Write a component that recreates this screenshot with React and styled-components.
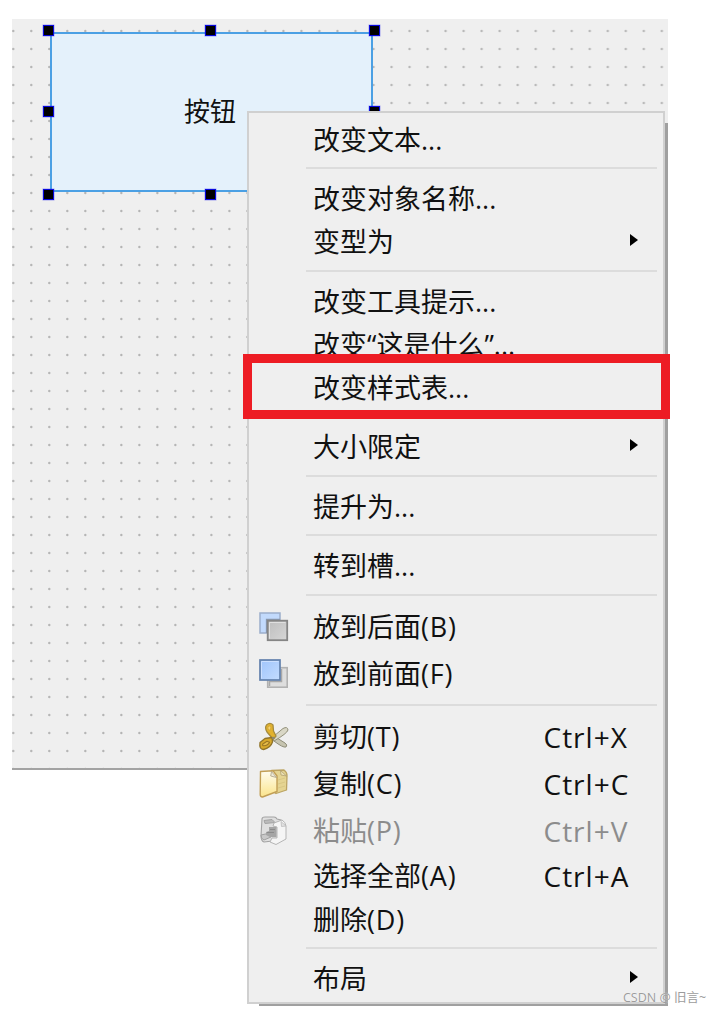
import React from 'react';
import styled, {createGlobalStyle} from 'styled-components';

const GlobalStyle = createGlobalStyle`
    body {
        margin: 0;
        background-color: #fff;
        font-family: "Open Sans", "Noto Sans CJK SC", sans-serif;
        color: #111;
    }
`

const Page = styled.main`
    position: relative;
    box-sizing: border-box;
    height: 1011px;
    padding: 19px 0 0 12px;
    overflow: hidden;
`

const Form = styled.section`
    position: relative;
    box-sizing: border-box;
    width: 656px;
    height: 751px;
    background-color: #efefef;
    background-image: radial-gradient(circle at 1.2px 12px, #b4b4b4 0.6px, transparent 1.7px);
    background-size: 18.03px 18px;
    border-bottom: 2px solid #a3a3a3;
`

const PushButton = styled.div`
    position: absolute;
    left: 38px;
    top: 13px;
    box-sizing: border-box;
    width: 323px;
    height: 160px;
    display: flex;
    align-items: center;
    justify-content: center;
    padding: 0 3px 4px 0;
    border: 2px solid #4ba0e4;
    background-color: #e4f1fb;
    font-size: 26px;
`

const Handle = styled.i`
    position: absolute;
    left: ${props => props.$x}px;
    top: ${props => props.$y}px;
    box-sizing: border-box;
    width: 11px;
    height: 11px;
    border: 1px solid #0808dc;
    background-color: #000;
    box-shadow: 0 0 0 0.5px rgba(40, 40, 240, 0.4);
`

const Menu = styled.ul`
    position: absolute;
    left: 247px;
    top: 111px;
    box-sizing: border-box;
    width: 418px;
    height: 893px;
    margin: 0;
    padding: 4px 6px 0 9px;
    list-style: none;
    border: 2px solid #d0d0d0;
    background-color: #efefef;
    &::before, &::after {
        content: "";
        position: absolute;
        background-color: #a0a0a0;
    }
    &::before {
        left: 416px;
        top: 10px;
        width: 3px;
        height: 883px;
    }
    &::after {
        left: 10px;
        top: 891px;
        width: 409px;
        height: 2px;
    }
`

const Row = styled.li`
    display: grid;
    grid-template-columns: 55px 1fr auto;
    align-items: center;
    box-sizing: border-box;
    height: ${props => props.$tall ? 47 : 43.3}px;
    padding: 2px 19px 0 0;
    font-size: 27px;
    line-height: 40px;
    white-space: nowrap;
    color: ${props => props.$disabled ? '#8c8c8c' : '#111'};
    svg {
        display: block;
    }
`

const Label = styled.span`
    grid-column: 2;
`

const Mnemonic = styled.span`
    letter-spacing: 0.8px;
`

const Shortcut = styled.span`
    width: 94.5px;
    font-size: 28px;
    letter-spacing: 1px;
`

const Arrow = styled.i`
    margin-bottom: 4px;
    border-left: 8px solid #000;
    border-top: 6.5px solid transparent;
    border-bottom: 6.5px solid transparent;
`

const Separator = styled.li`
    height: 2px;
    margin: 7px 0 7px 48px;
    background-color: #dcdcdc;
`

const RedFrame = styled.div`
    position: absolute;
    left: 243px;
    top: 354px;
    box-sizing: border-box;
    width: 427px;
    height: 65px;
    border: 9px solid #ed1c24;
`

const Watermark = styled.div`
    position: absolute;
    left: 623px;
    top: 988px;
    font-size: 12.5px;
    line-height: 20px;
    white-space: nowrap;
    color: #9c9c9c;
    text-shadow: 0 0 1px #fff;
`

const Gradients = () => (
    <defs>
        <linearGradient id="blue" x1="0" y1="0" x2="1" y2="1">
            <stop offset="0" stopColor="#9fc4fb"/>
            <stop offset="1" stopColor="#c3dcff"/>
        </linearGradient>
        <linearGradient id="grey" x1="0" y1="0" x2="1" y2="1">
            <stop offset="0" stopColor="#bdbdbd"/>
            <stop offset="1" stopColor="#d6d6d6"/>
        </linearGradient>
        <linearGradient id="paper" x1="0" y1="0" x2="0" y2="1">
            <stop offset="0" stopColor="#fffdf0"/>
            <stop offset="1" stopColor="#fbe48b"/>
        </linearGradient>
    </defs>
)

const BackIcon = () => (
    <svg width="32" height="32" viewBox="0 0 32 32">
        <Gradients/>
        <rect x="2" y="2" width="20" height="20" fill="#c2dafc" stroke="#9caecb" strokeWidth="1.5"/>
        <path d="M8.5 22V8.5H22" fill="none" stroke="#8998af" strokeWidth="1.3"/>
        <rect x="9.7" y="9.7" width="19.5" height="19.5" fill="url(#grey)" stroke="#858585" strokeWidth="1.8"/>
        <path d="M11.5 27.5V11.5H27.5" fill="none" stroke="#e0e0e0"/>
    </svg>
)

const FrontIcon = () => (
    <svg width="32" height="32" viewBox="0 0 32 32">
        <rect x="9.7" y="9.7" width="19.5" height="19.5" fill="#dedede" stroke="#b2b2b2" strokeWidth="1.6"/>
        <path d="M11.5 28V23.5H23.5V11" fill="none" stroke="#a8a8a8" strokeWidth="1.5"/>
        <rect x="2" y="2" width="20" height="20" fill="url(#blue)" stroke="#6280ac" strokeWidth="1.7"/>
        <path d="M3.5 20.5V3.5H20.5" fill="none" stroke="#cce0ff"/>
    </svg>
)

const CutIcon = () => (
    <svg width="32" height="32" viewBox="0 0 32 32" strokeLinejoin="round">
        <path d="M15 14.5L27 22Q30 24 28 26Q25 27 16 20L12 17.5Z" fill="#c6c4b0" stroke="#8f8d79"/>
        <path d="M13 17.5L25 7.5Q29.5 5 30 9Q29 12.5 16 20Z" fill="#d9d7c6" stroke="#929079"/>
        <path d="M8.5 4Q12 .8 15 4L15.5 10L18 15L15 18.5L12 14.5L9 11Q6.5 7 8.5 4Z" fill="#e2b22e" stroke="#a58b3e" strokeWidth="1.3"/>
        <path d="M10 5.8Q12.5 4 12.8 6.3L12.3 9.5Q8.8 8.5 10 5.8Z" fill="#f4d475" stroke="#d0a22e" strokeWidth=".7"/>
        <path d="M2 21.5L7 17.5L14 16.5L14.5 21Q12.5 27 5.5 28.5Q1 28.5 2 21.5Z" fill="#d8a92b" stroke="#90742a" strokeWidth="1.3"/>
        <path d="M4.8 23L9 20.3L11.6 21.2Q10 24.5 6 24.8Q4 24.8 4.8 23Z" fill="#e6bd4c" stroke="#9b7724" strokeWidth="1.1"/>
        <circle cx="15.3" cy="17" r="1.3" fill="#888675"/>
    </svg>
)

const CopyIcon = () => (
    <svg width="32" height="32" viewBox="0 0 32 32" strokeLinejoin="round">
        <path d="M13.5 2.5L26 2Q29.3 4.5 29 8L28.5 22L18 25.5L13 22Z" fill="#e5d492" stroke="#bca463" strokeWidth="1.3"/>
        <path d="M20 12L27 10M20 16L27 14M20 20L27 18" stroke="#d9c784"/>
        <path d="M22.5 2.5L23 7L28.5 8Z" fill="#eee3b7" stroke="#a7966b" strokeWidth=".7"/>
        <path d="M2.5 3.5L15 2.8L19 8V23.5L4.5 29Q2 29 2.2 26Z" fill="url(#paper)" stroke="#c29f55" strokeWidth="1.4"/>
        <path d="M13.5 3.5L12.7 8L18.5 9.5Z" fill="#eee9d8" stroke="#aba084" strokeWidth=".8"/>
    </svg>
)

const PasteIcon = () => (
    <svg width="32" height="32" viewBox="0 0 32 32" strokeLinejoin="round">
        <path d="M4 4Q4 2 7 2H16Q18 2 19 4L23 5V25L6 27Q3 26 3 21Z" fill="#dfdfdf" stroke="#a3a3a3" strokeWidth="1.1"/>
        <path d="M6 5.5L14 4.5L17 7.5L7 8.5Z" fill="#bbb" stroke="#a3a3a3"/>
        <path d="M3 20L12 18L13 22L6 25Q3 24 3 20Z" fill="#c8c8c8" stroke="#a0a0a0"/>
        <path d="M16 8L24 5Q27.5 7 28 11V24L18 29.5L12 27L14 23H19V12L15 11Z" fill="#f5f5f5" stroke="#b5b5b5"/>
        <path d="M23 6.5L23.5 11.5L28 11Z" fill="#e2e2e2" stroke="#bbb" strokeWidth=".8"/>
        <path d="M11 12H18.5V22H12L8 20V17L11 16Z" fill="#a5a5a5"/>
        <path d="M9 17.5H16M12 14.5H17" stroke="#8b8b8b"/>
    </svg>
)

const groups = [
    [{label: '改变文本...'}],
    [{label: '改变对象名称...'}, {label: '变型为', submenu: true}],
    [{label: '改变工具提示...'}, {label: '改变“这是什么”...'}, {label: '改变样式表...'}],
    [{label: '大小限定', submenu: true}],
    [{label: '提升为...'}],
    [{label: '转到槽...'}],
    [
        {label: '放到后面', mnemonic: 'B', icon: BackIcon},
        {label: '放到前面', mnemonic: 'F', icon: FrontIcon}
    ],
    [
        {label: '剪切', mnemonic: 'T', icon: CutIcon, shortcut: 'Ctrl+X'},
        {label: '复制', mnemonic: 'C', icon: CopyIcon, shortcut: 'Ctrl+C'},
        {label: '粘贴', mnemonic: 'P', icon: PasteIcon, shortcut: 'Ctrl+V', disabled: true},
        {label: '选择全部', mnemonic: 'A', shortcut: 'Ctrl+A'},
        {label: '删除', mnemonic: 'D'}
    ],
    [{label: '布局', submenu: true}]
]

const handles = [
    [31, 6], [193, 6], [357, 6],
    [31, 87], [357, 87],
    [31, 170], [193, 170], [357, 170]
]

const MenuItem = ({label, mnemonic, icon: Icon, shortcut, submenu, disabled}) => (
    <Row $tall={!!Icon} $disabled={disabled}>
        {Icon && <Icon/>}
        <Label>
            {label}
            {mnemonic && <Mnemonic>{`(${mnemonic})`}</Mnemonic>}
        </Label>
        {shortcut && <Shortcut>{shortcut}</Shortcut>}
        {submenu && <Arrow/>}
    </Row>
)

export default function App() {
    return (
        <Page>
            <GlobalStyle/>
            <Form>
                <PushButton>按钮</PushButton>
                {handles.map(([x, y]) => <Handle key={`${x}-${y}`} $x={x} $y={y}/>)}
            </Form>
            <Menu>
                {groups.map((items, i) => (
                    <React.Fragment key={i}>
                        {i > 0 && <Separator/>}
                        {items.map(item => <MenuItem key={item.label} {...item}/>)}
                    </React.Fragment>
                ))}
            </Menu>
            <RedFrame/>
            <Watermark>CSDN @ 旧言~</Watermark>
        </Page>
    );
}
